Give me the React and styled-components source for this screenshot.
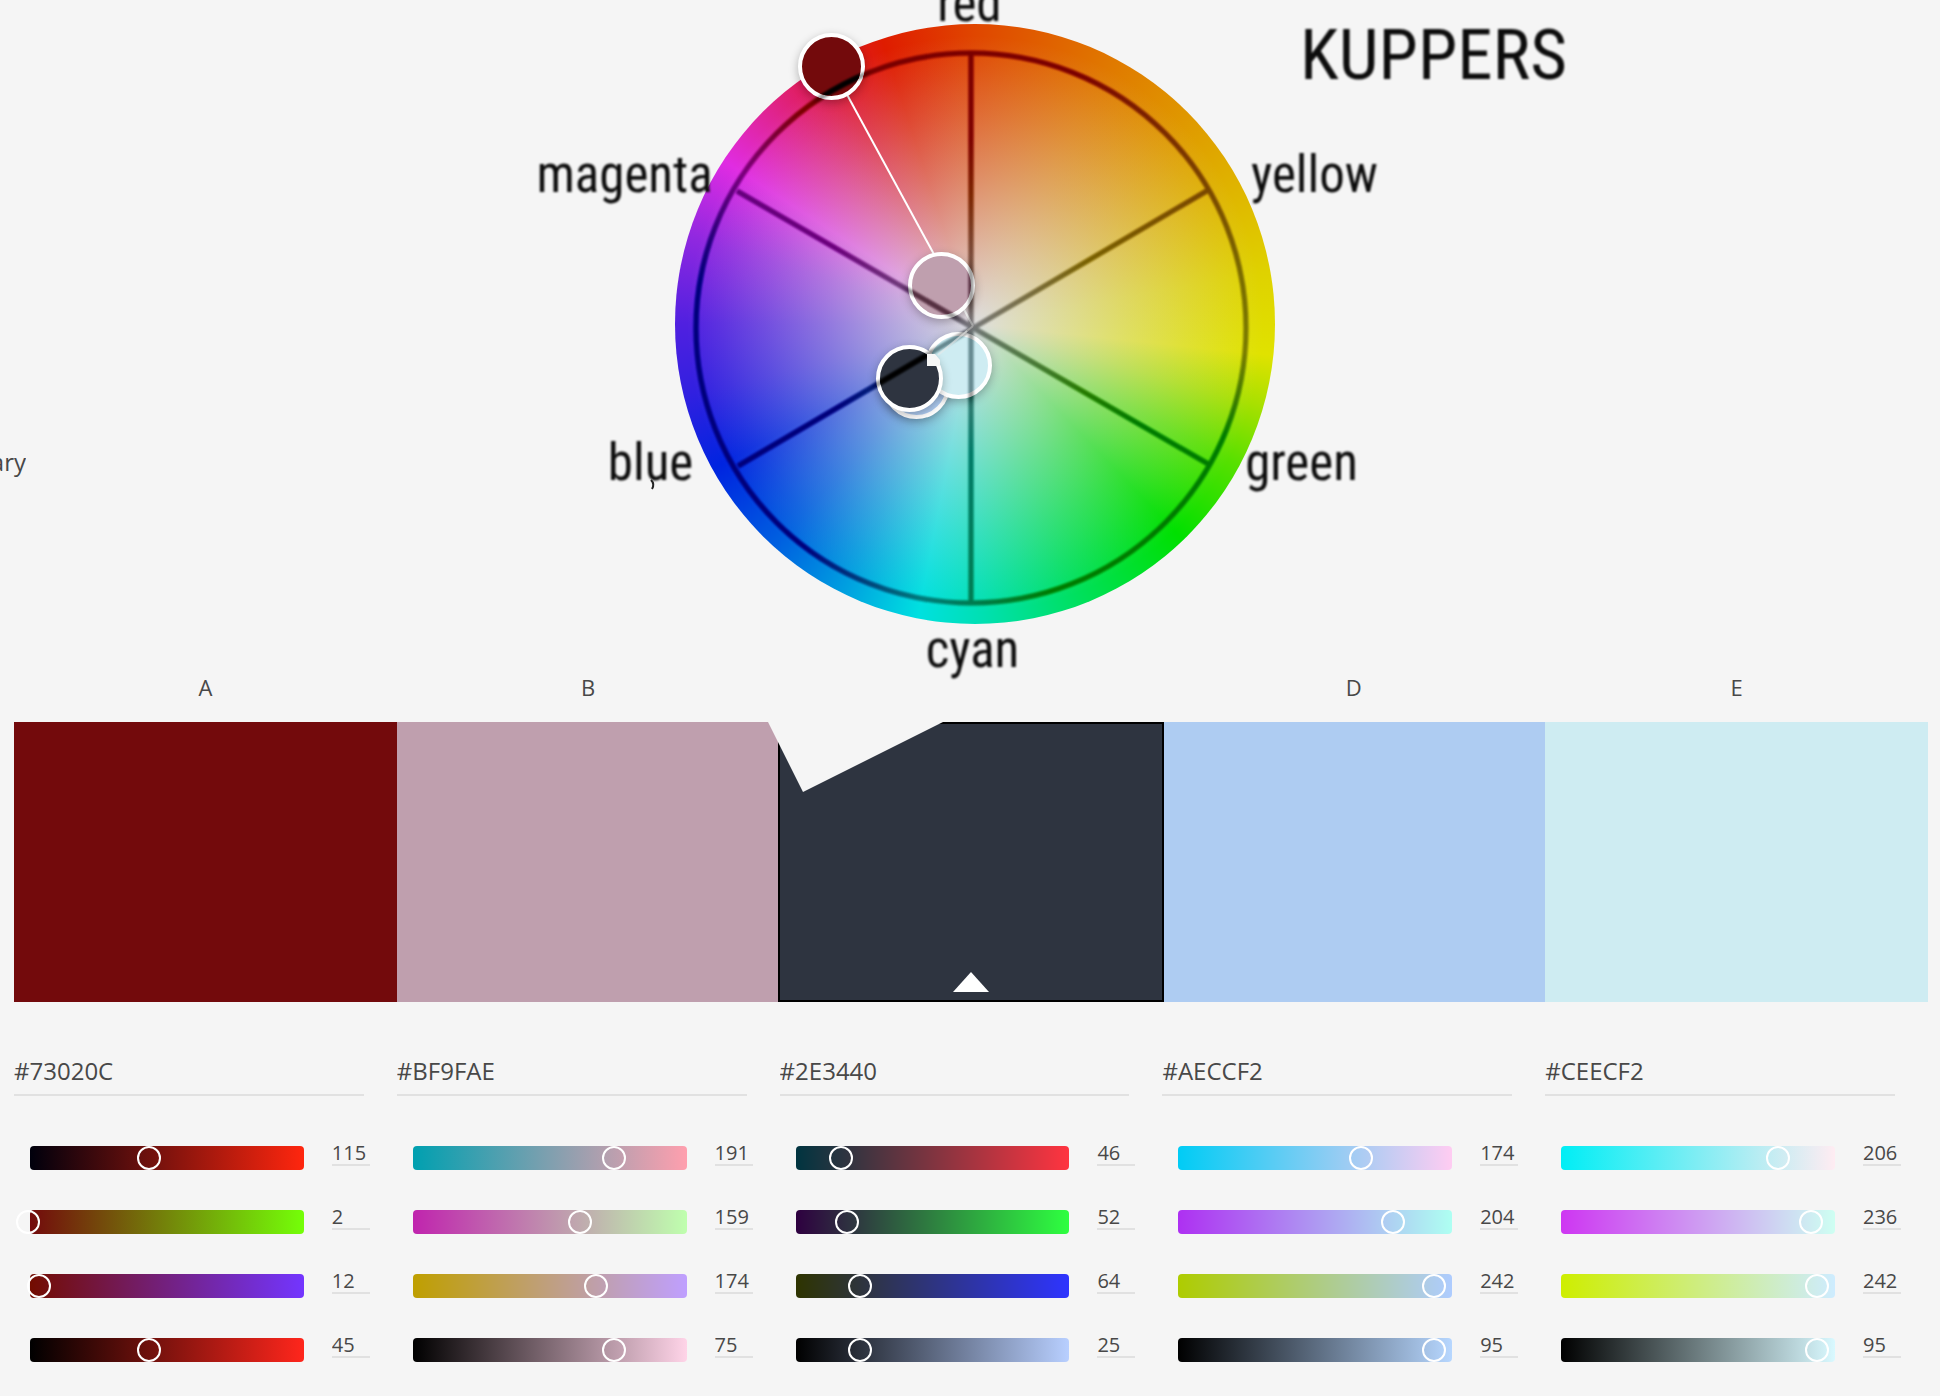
import React, { useState } from "react";
import styled, { createGlobalStyle } from "styled-components";

const GlobalStyle = createGlobalStyle`
  *, *::before, *::after { box-sizing: border-box; }
  body {
    margin: 0;
    background: #f5f5f5;
    color: #484848;
    font-family: "Open Sans", "Noto Sans", sans-serif;
    overflow-x: hidden;
  }
`;

const Page = styled.main`
  padding: 0 12px 24px 14px;
`;

const Stage = styled.section`
  position: relative;
  display: flex;
  justify-content: center;
  height: 675px;
  padding: 24px 0 0 7px;
`;

const RuleName = styled.span`
  position: absolute;
  left: -14px;
  top: 444px;
  width: 26px;
  display: flex;
  justify-content: flex-end;
  overflow: hidden;
  font-size: 24px;
  line-height: 36px;
`;

const Wheel = styled.div`
  position: relative;
  isolation: isolate;
  flex: none;
  width: 600px;
  height: 600px;
`;

const Disc = styled.div`
  position: absolute;
  inset: 0;
  border-radius: 50%;
  background:
    radial-gradient(circle closest-side, rgba(222, 222, 222, 1) 0%, rgba(222, 222, 222, 0.73) 25%, rgba(222, 222, 222, 0.45) 50%, rgba(222, 222, 222, 0.24) 70%, rgba(222, 222, 222, 0.1) 84%, rgba(222, 222, 222, 0) 96%),
    conic-gradient(
      #e04600 0deg,
      #e07800 27deg,
      #dfa800 55deg,
      #dfd200 80deg,
      #e0e200 96deg,
      #a8e000 106deg,
      #58e000 118deg,
      #00e000 136deg,
      #00e060 160deg,
      #00e0b0 178deg,
      #00e0e0 191deg,
      #00a0e0 206deg,
      #0060e0 222deg,
      #0024e0 241deg,
      #3020e0 256deg,
      #5020e0 270deg,
      #9028e0 287deg,
      #e02ce2 303deg,
      #e02490 316deg,
      #df1830 331deg,
      #df1c00 342deg,
      #e04600 360deg
    );
`;

const Rays = styled.svg`
  position: absolute;
  inset: 0;
  width: 100%;
  height: 100%;
  overflow: visible;
  pointer-events: none;
`;

const Diagram = styled(Rays)`
  mix-blend-mode: ${(p) => p.$blend};
  opacity: ${(p) => p.$opacity};
  filter: blur(1px);
`;

const Pin = styled.button`
  position: absolute;
  left: ${(p) => p.$x}px;
  top: ${(p) => p.$y}px;
  width: 67px;
  height: 67px;
  margin: -34px 0 0 -34px;
  padding: 0;
  border: 4px solid #fff;
  border-radius: 50%;
  background: ${(p) => p.$color};
  box-shadow: 0 3px 10px rgba(0, 0, 0, 0.28);
`;

const HueName = styled.span`
  position: absolute;
  left: ${(p) => p.$x}px;
  top: ${(p) => p.$y}px;
  transform: translate(-50%, -50%);
  margin: 0;
  color: #0c0c0c;
  font-family: "Roboto Condensed", "Open Sans Condensed", "Open Sans", sans-serif;
  font-size: ${(p) => (p.$title ? 71 : 51)}px;
  font-weight: 400;
  line-height: 1;
  white-space: nowrap;
  filter: blur(1px);
`;

const Letters = styled.div`
  display: grid;
  grid-template-columns: repeat(5, 1fr);
  padding-bottom: 23px;
  font-size: 22px;
  line-height: 24px;
  text-align: center;
`;

const Swatches = styled.div`
  position: relative;
  display: grid;
  grid-template-columns: repeat(5, 1fr);
  height: 280px;
`;

const Swatch = styled.button`
  display: flex;
  align-items: flex-end;
  justify-content: center;
  padding: 0 0 8px;
  margin: ${(p) => (p.$active ? "0 -2px" : "0")};
  border: ${(p) => (p.$active ? "2px solid #000" : "0")};
  border-radius: 0;
  background: ${(p) => p.$color};
  z-index: ${(p) => (p.$active ? 1 : 0)};
`;

const Cover = styled.svg`
  position: absolute;
  left: 0;
  top: 0;
  z-index: 2;
  pointer-events: none;
`;

const Columns = styled.div`
  display: grid;
  grid-template-columns: repeat(5, 1fr);
  padding-top: 52px;
`;

const Column = styled.section`
  min-width: 0;
`;

const HexField = styled.input`
  display: block;
  width: calc(100% - 33px);
  height: 42px;
  margin-bottom: 50px;
  padding: 0 0 8px;
  border: 0;
  border-bottom: 2px solid #e1e1e1;
  border-radius: 0;
  background: transparent;
  color: inherit;
  font: 24px "Open Sans", "Noto Sans", sans-serif;
  outline: 0;
`;

const Channels = styled.div`
  display: grid;
  gap: 40px;
  padding: 0 27px 0 16px;
`;

const Channel = styled.div`
  display: flex;
  align-items: flex-end;
  gap: 28px;
  height: 24px;
`;

const Track = styled.div`
  flex: 1;
  min-width: 0;
  height: 24px;
  border-radius: 4px;
  background: linear-gradient(to right, ${(p) => p.$from}, ${(p) => p.$to});
`;

const Range = styled.input`
  display: block;
  appearance: none;
  width: calc(100% + 24px);
  height: 24px;
  margin: 0 0 0 -16px;
  background: transparent;
  outline: 0;

  &::-webkit-slider-runnable-track {
    height: 24px;
    background: transparent;
  }
  &::-webkit-slider-thumb {
    appearance: none;
    width: 24px;
    height: 24px;
    border: 2px solid #fff;
    border-radius: 50%;
    background: transparent;
  }
`;

const ValueField = styled.input`
  width: 38px;
  height: 26px;
  margin-bottom: 4px;
  padding: 0;
  border: 0;
  border-bottom: 2px solid #e1e1e1;
  border-radius: 0;
  background: transparent;
  color: inherit;
  font: 20px "Open Sans", "Noto Sans", sans-serif;
  outline: 0;
`;

const CHANNEL_NAMES = ["Red", "Green", "Blue", "Brightness"];

const COLORS = [
  {
    letter: "A", hex: "#73020C", fill: "#730a0c", pin: [157, 43],
    values: [115, 2, 12, 45],
    ramps: [["#00000c", "#ff260e"], ["#730a0c", "#74ff08"], ["#730c00", "#7335ff"], ["#000000", "#ff261c"]],
  },
  {
    letter: "B", hex: "#BF9FAE", fill: "#bf9fae", pin: [267, 262],
    values: [191, 159, 174, 75],
    ramps: [["#00a0b0", "#ff9fae"], ["#c024ae", "#bfffae"], ["#bf9f00", "#bf9fff"], ["#000000", "#ffd4e8"]],
  },
  {
    letter: "C", hex: "#2E3440", fill: "#2e3440", pin: [235, 355],
    values: [46, 52, 64, 25],
    ramps: [["#003440", "#ff3440"], ["#2e0040", "#2eff40"], ["#2e3400", "#2e34ff"], ["#000000", "#b8cfff"]],
  },
  {
    letter: "D", hex: "#AECCF2", fill: "#aeccf2", pin: [242, 362],
    values: [174, 204, 242, 95],
    ramps: [["#00ccf5", "#ffccf2"], ["#ae30f2", "#aefff2"], ["#aecc00", "#aeccff"], ["#000000", "#b7d7ff"]],
  },
  {
    letter: "E", hex: "#CEECF2", fill: "#ceecf2", pin: [284, 342],
    values: [206, 236, 242, 95],
    ramps: [["#00eef5", "#ffecf2"], ["#ce36f2", "#cefff2"], ["#ceee00", "#ceecff"], ["#000000", "#d9f9ff"]],
  },
];

const PIN_ORDER = ["D", "E", "B", "A", "C"];

const HUES = [
  { name: "red", x: 295, y: -21 },
  { name: "yellow", x: 640, y: 150 },
  { name: "green", x: 627, y: 438 },
  { name: "cyan", x: 298, y: 625 },
  { name: "blue", x: -24, y: 438 },
  { name: "magenta", x: -50, y: 150 },
];

function Spokes({ color }) {
  return (
    <g fill="none" stroke={color} strokeWidth="5">
      <circle cx="296" cy="304" r="275" />
      <path d="M296 29V579M62 167L535 441M63 442L535 165" />
    </g>
  );
}

function ColorWheel() {
  return (
    <Wheel>
      <Disc />
      <Rays viewBox="0 0 600 600" aria-hidden="true">
        <g stroke="#fff" strokeWidth="2">
          <line x1="157" y1="43" x2="298" y2="302" />
          <line x1="235" y1="355" x2="298" y2="302" />
        </g>
      </Rays>
      {PIN_ORDER.map((letter) => {
        const c = COLORS.find((item) => item.letter === letter);
        return <Pin key={letter} $x={c.pin[0]} $y={c.pin[1]} $color={c.fill} aria-label={`Color ${letter}`} />;
      })}
      <Diagram $blend="color-burn" $opacity={1} viewBox="0 0 600 600" aria-hidden="true">
        <Spokes color="#8a8a8a" />
      </Diagram>
      <Diagram $blend="normal" $opacity={0.38} viewBox="0 0 600 600" aria-hidden="true">
        <Spokes color="#000" />
      </Diagram>
      <Rays viewBox="0 0 600 600" aria-hidden="true">
        <path d="M252 330h8l5 6v6h-13z" fill="#f7f7f7" />
        <line x1="263" y1="331" x2="292" y2="307" stroke="#e8eaea" strokeWidth="2" opacity="0.6" />
      </Rays>
      {HUES.map((h) => (
        <HueName key={h.name} $x={h.x} $y={h.y}>{h.name}</HueName>
      ))}
      <HueName as="h1" $title $x={759} $y={30}>KUPPERS</HueName>
      <Rays viewBox="0 0 600 600" aria-hidden="true">
        <path d="M-24 456q4 4 1 9" fill="none" stroke="#222" strokeWidth="2" />
      </Rays>
    </Wheel>
  );
}

function ColorColumn({ color }) {
  const [hex, setHex] = useState(color.hex);
  const [values, setValues] = useState(color.values);
  const change = (index, value) =>
    setValues(values.map((v, i) => (i === index ? Number(value) || 0 : v)));

  return (
    <Column>
      <HexField aria-label={`Hex of color ${color.letter}`} value={hex} onChange={(e) => setHex(e.target.value)} />
      <Channels>
        {CHANNEL_NAMES.map((name, i) => (
          <Channel key={name}>
            <Track $from={color.ramps[i][0]} $to={color.ramps[i][1]}>
              <Range
                type="range"
                min="0"
                max={i === 3 ? 100 : 255}
                value={values[i]}
                aria-label={`${name} of color ${color.letter}`}
                onChange={(e) => change(i, e.target.value)}
              />
            </Track>
            <ValueField
              value={values[i]}
              aria-label={`${name} value of color ${color.letter}`}
              onChange={(e) => change(i, e.target.value)}
            />
          </Channel>
        ))}
      </Channels>
    </Column>
  );
}

export default function App() {
  return (
    <Page>
      <GlobalStyle />
      <Stage>
        <RuleName>ary</RuleName>
        <ColorWheel />
      </Stage>
      <Letters>
        {COLORS.map((c) => (
          <span key={c.letter}>{c.letter === "C" ? "" : c.letter}</span>
        ))}
      </Letters>
      <Swatches>
        {COLORS.map((c) => (
          <Swatch key={c.letter} $color={c.fill} $active={c.letter === "C"} aria-label={`Swatch ${c.letter}`}>
            {c.letter === "C" && (
              <svg width="36" height="20" viewBox="0 0 36 20" aria-hidden="true">
                <path d="M18 0L36 20H0z" fill="#fff" />
              </svg>
            )}
          </Swatch>
        ))}
        <Cover width="940" height="72" viewBox="0 0 940 72" aria-hidden="true">
          <path d="M754 0L789 70L929 0z" fill="#f5f5f5" />
        </Cover>
      </Swatches>
      <Columns>
        {COLORS.map((c) => (
          <ColorColumn key={c.letter} color={c} />
        ))}
      </Columns>
    </Page>
  );
}
